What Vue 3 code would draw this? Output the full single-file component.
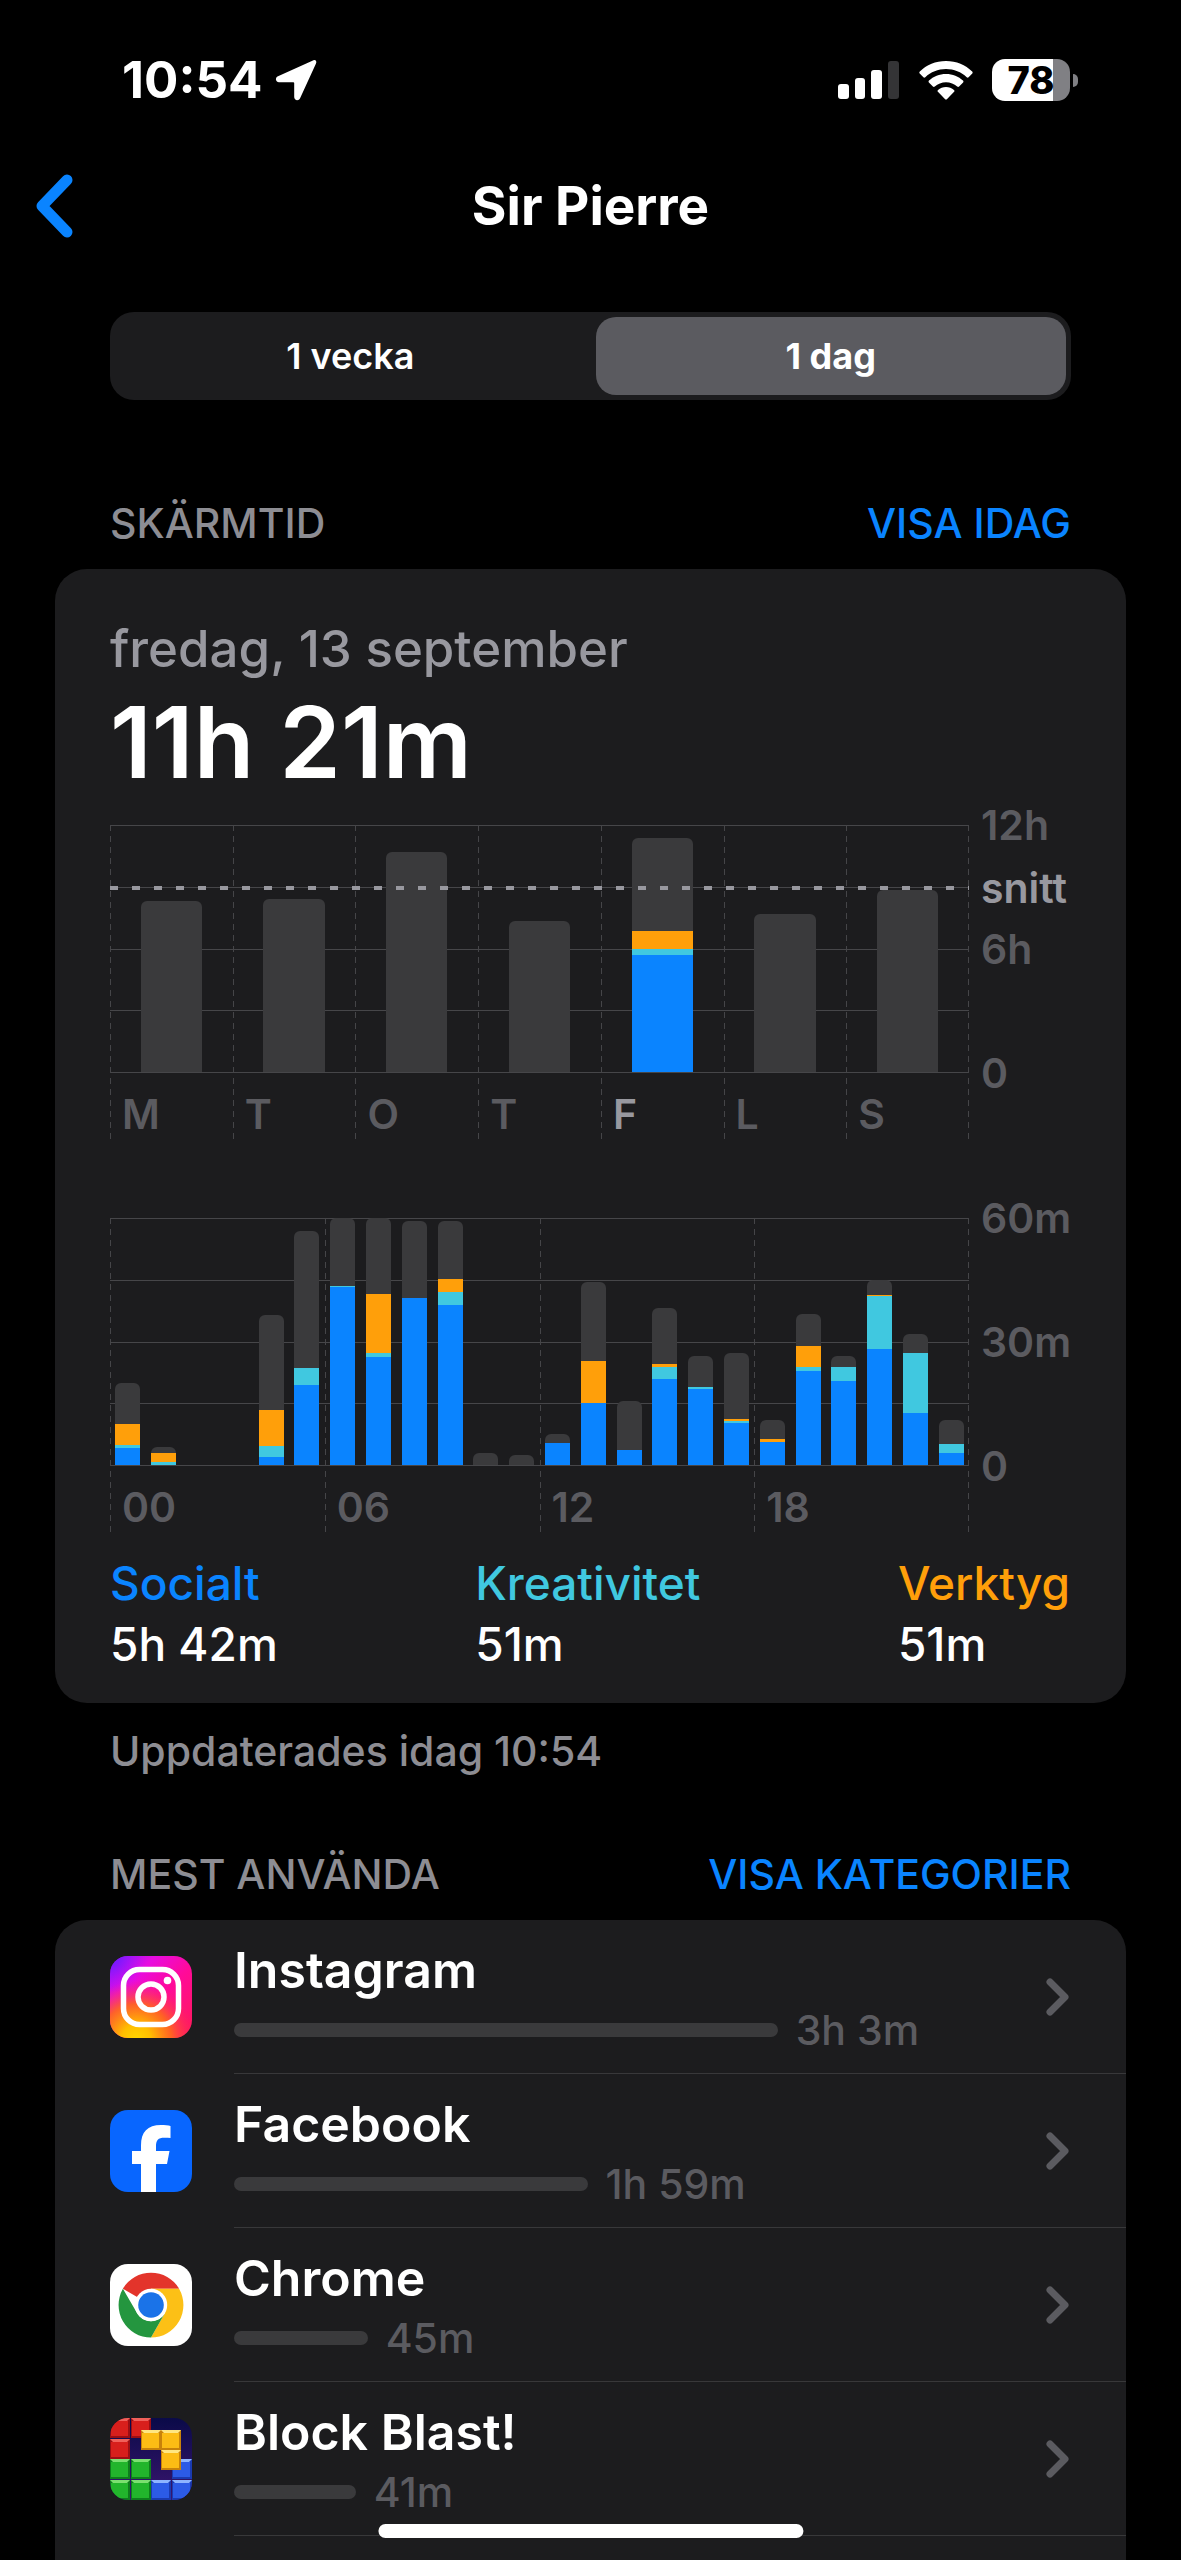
<template>
  <div class="screen">
    <header class="status-bar">
      <div class="status-left">
        <span class="clock">10:54</span>
        <svg class="location" viewBox="0 0 42 42" aria-hidden="true">
          <path d="M38.5 1.2 3 17.2c-3.4 1.6-2.4 6 1 6h14.300c.6 0 .9.3.9.9V38c0 3.600 4.500 4.400 6 1L41 4.500c1-2.300-.6-4.200-2.500-3.300z" />
        </svg>
      </div>
      <div class="status-right">
        <svg class="signal" viewBox="0 0 62 40" aria-hidden="true">
          <rect x="0" y="24" width="11" height="15" rx="3" />
          <rect x="17" y="18" width="10" height="21" rx="3" />
          <rect x="33" y="10" width="11" height="29" rx="3" />
          <rect class="dim" x="50" y="1" width="11" height="38" rx="3" />
        </svg>
        <svg class="wifi" viewBox="0 0 54 40" aria-hidden="true">
          <path d="M27 1C16.700 1 7.500 5 .8 11.500c-.6.6-.6 1.300-.1 1.900l3.700 3.800c.5.600 1.300.600 1.900 0C11.700 12 19 9 27 9s15.300 3 20.700 8.200c.6.600 1.400.600 1.900 0l3.700-3.800c.5-.6.5-1.300-.1-1.900C46.500 5 37.300 1 27 1z" />
          <path d="M27 14c-6.600 0-12.600 2.500-17 6.600-.6.600-.6 1.400-.1 1.900l4 4.100c.6.600 1.300.500 1.900 0 3-2.700 6.900-4.300 11.200-4.300s8.200 1.600 11.200 4.300c.6.500 1.300.6 1.900 0l4-4.100c.5-.5.5-1.300-.1-1.900C39.600 16.500 33.600 14 27 14z" />
          <path d="M27 27c-3 0-5.800 1.100-8 2.900-.6.600-.6 1.300-.1 1.900l7 7.100c.6.700 1.600.700 2.200 0l7-7.100c.5-.6.5-1.300-.1-1.900-2.200-1.800-5-2.900-8-2.900z" />
        </svg>
        <div class="battery">
          <div class="battery-body">78</div>
          <div class="battery-cap"></div>
        </div>
      </div>
    </header>

    <nav class="nav-bar">
      <button class="back" type="button" aria-label="Tillbaka">
        <svg viewBox="0 0 38 64" aria-hidden="true">
          <path d="M32 6 7 32l25 26" />
        </svg>
      </button>
      <h1>Sir Pierre</h1>
    </nav>

    <div class="segmented">
      <button
        v-for="option in periods"
        :key="option"
        type="button"
        :class="{ active: option === period }"
        :aria-pressed="option === period"
        @click="period = option"
      >
        {{ option }}
      </button>
    </div>

    <div class="section-header">
      <h2>SKÄRMTID</h2>
      <a href="#today">VISA IDAG</a>
    </div>

    <section class="card summary">
      <p class="date">fredag, 13 september</p>
      <p class="total">11h 21m</p>

      <div v-for="chart in charts" :key="chart.id" class="chart" :class="chart.id">
        <div class="plot">
          <div class="grid-lines">
            <i v-for="n in 5" :key="n"></i>
          </div>
          <div class="ticks">
            <div
              v-for="(tick, i) in chart.ticks"
              :key="i"
              class="tick"
              :class="{ current: i === chart.current }"
            >
              {{ tick }}
            </div>
          </div>
          <div class="bars">
            <div v-for="(bar, i) in chart.bars" :key="i" class="slot">
              <div class="bar">
                <div
                  v-for="(value, k) in bar"
                  :key="k"
                  :class="categories[k]"
                  :style="{ height: (value / chart.max) * 100 + '%' }"
                ></div>
              </div>
            </div>
          </div>
          <div v-if="chart.average" class="average">
            <i :style="{ bottom: averageOffset(chart) }"></i>
          </div>
        </div>
        <div class="axis">
          <span v-for="label in chart.axis" :key="label">{{ label }}</span>
          <span v-if="chart.average" class="snitt" :style="{ bottom: averageOffset(chart) }">snitt</span>
        </div>
      </div>

      <dl class="legend">
        <div v-for="item in legend" :key="item.name">
          <dt :class="item.kind">{{ item.name }}</dt>
          <dd>{{ item.time }}</dd>
        </div>
      </dl>
    </section>

    <p class="updated">Uppdaterades idag 10:54</p>

    <div class="section-header second">
      <h2>MEST ANVÄNDA</h2>
      <a href="#categories">VISA KATEGORIER</a>
    </div>

    <section class="card apps">
      <a v-for="app in apps" :key="app.id" class="app" :href="'#' + app.id">
        <!-- Instagram -->
        <svg v-if="app.id === 'instagram'" class="app-icon" viewBox="0 0 82 82" aria-hidden="true">
          <defs>
            <linearGradient id="ig-base" x1="0" y1="0" x2="1" y2="1">
              <stop offset="0" stop-color="#8a16ff" />
              <stop offset=".28" stop-color="#e80ce0" />
              <stop offset=".55" stop-color="#ff0a9a" />
              <stop offset="1" stop-color="#ff1a55" />
            </linearGradient>
            <radialGradient id="ig-warm" cx=".32" cy="1.02" r=".72">
              <stop offset="0" stop-color="#ffd600" />
              <stop offset=".25" stop-color="#ffbe00" />
              <stop offset=".6" stop-color="#ff6a1a" stop-opacity=".9" />
              <stop offset="1" stop-color="#ff2a5a" stop-opacity="0" />
            </radialGradient>
            <radialGradient id="ig-violet" cx="0" cy="0" r=".45">
              <stop offset="0" stop-color="#5b1cff" />
              <stop offset="1" stop-color="#b012ff" stop-opacity="0" />
            </radialGradient>
          </defs>
          <rect width="82" height="82" rx="18" fill="url(#ig-base)" />
          <rect width="82" height="82" rx="18" fill="url(#ig-warm)" />
          <rect width="82" height="82" rx="18" fill="url(#ig-violet)" />
          <rect x="13.500" y="13.500" width="55" height="55" rx="16" fill="none" stroke="#fff" stroke-width="5.500" />
          <circle cx="41" cy="41" r="13" fill="none" stroke="#fff" stroke-width="5.500" />
          <circle cx="57.500" cy="24.500" r="3.800" fill="#fff" />
        </svg>
        <!-- Facebook -->
        <svg v-else-if="app.id === 'facebook'" class="app-icon" viewBox="0 0 82 82" aria-hidden="true">
          <rect width="82" height="82" rx="18" fill="#0866ff" />
          <path fill="#fff" d="M31 82V54h-9V41h9v-5.500C31 22 37.500 15 51 15c3.500 0 7.500.4 9.500.9V28c-1.500-.2-3.500-.3-6-.3-6.500 0-8.500 2.500-8.500 8.800V41h13.500L57 54H46v28z" />
        </svg>
        <!-- Chrome -->
        <svg v-else-if="app.id === 'chrome'" class="app-icon" viewBox="0 0 82 82" aria-hidden="true">
          <rect width="82" height="82" rx="18" fill="#fff" />
          <path fill="#e3342b" d="M41 41 12.900 24.800A32.500 32.500 0 0 1 69.100 24.800H41z" />
          <path fill="#fcc016" d="M41 24.800H69.100A32.500 32.500 0 0 1 41 73.500L55 49.100z" />
          <path fill="#24963f" d="M12.900 24.800 27 49.100A16.200 16.200 0 0 0 55 49.100L41 73.500A32.500 32.500 0 0 1 12.900 24.800z" />
          <circle cx="41" cy="41" r="16.200" fill="#fff" />
          <circle cx="41" cy="41" r="12.800" fill="#1a73e8" />
        </svg>
        <!-- Block Blast -->
        <svg v-else class="app-icon" viewBox="0 0 82 82" aria-hidden="true">
          <defs>
            <clipPath id="bb-clip"><rect width="82" height="82" rx="18" /></clipPath>
            <linearGradient id="bb-bg" x1="0" y1="0" x2="0" y2="1">
              <stop offset="0" stop-color="#0a0a48" />
              <stop offset="1" stop-color="#3a1670" />
            </linearGradient>
          </defs>
          <g clip-path="url(#bb-clip)">
            <rect width="82" height="82" fill="url(#bb-bg)" />
            <g v-for="(block, i) in blocks" :key="i">
              <rect :x="block.x" :y="block.y" width="20" height="20" :fill="block.tone[2]" />
              <path :d="`M${block.x} ${block.y}h20l-3 3h-14z`" :fill="block.tone[0]" />
              <rect :x="block.x + 1" :y="block.y + 3" width="17" height="15" :fill="block.tone[1]" />
            </g>
          </g>
        </svg>

        <div class="app-content">
          <div class="app-body">
            <span class="app-name">{{ app.name }}</span>
            <div class="usage">
              <div class="usage-bar" :style="{ width: (app.minutes / longest) * 68.3 + '%' }"></div>
              <span class="usage-time">{{ app.time }}</span>
            </div>
          </div>
          <svg class="chevron" viewBox="0 0 25 40" aria-hidden="true">
            <path d="M5 5l15 15L5 35" />
          </svg>
        </div>
      </a>
    </section>

    <div class="home-indicator"></div>
  </div>
</template>

<script setup>
import { ref } from 'vue'

const periods = ['1 vecka', '1 dag']
const period = ref('1 dag')

// Order of the values in every bar, from the bottom up
const categories = ['social', 'creative', 'tools', 'other']

const charts = [
  {
    id: 'week',
    max: 12,
    average: 8.94,
    axis: ['12h', '6h', '0'],
    ticks: ['M', 'T', 'O', 'T', 'F', 'L', 'S'],
    current: 4,
    // hours
    bars: [
      [0, 0, 0, 8.3],
      [0, 0, 0, 8.4],
      [0, 0, 0, 10.7],
      [0, 0, 0, 7.35],
      [5.7, 0.3, 0.85, 4.5],
      [0, 0, 0, 7.7],
      [0, 0, 0, 8.85]
    ]
  },
  {
    id: 'day',
    max: 60,
    axis: ['60m', '30m', '0'],
    ticks: ['00', '06', '12', '18'],
    // minutes
    bars: [
      [4.2, 0.7, 5.1, 9.9],
      [0, 0.8, 2.2, 1.3],
      [],
      [],
      [1.9, 2.8, 8.7, 23.1],
      [19.4, 4.2, 0, 33.3],
      [43.2, 0.3, 0, 16.5],
      [26.2, 0.9, 14.4, 18.5],
      [40.6, 0, 0, 18.7],
      [38.9, 3.2, 3.1, 14.2],
      [0, 0, 0, 2.9],
      [0, 0, 0, 2.5],
      [5.4, 0, 0, 2.1],
      [15, 0, 10.2, 19.3],
      [3.7, 0, 0, 11.9],
      [20.8, 2.9, 0.9, 13.5],
      [18.5, 0.5, 0, 7.5],
      [10.3, 0.4, 0.6, 15.8],
      [5.7, 0, 0.7, 4.6],
      [22.8, 0.9, 5.1, 8],
      [20.4, 3.3, 0, 2.9],
      [28.1, 12.9, 0.3, 3.6],
      [12.6, 14.5, 0, 4.8],
      [2.8, 2.4, 0, 5.8]
    ]
  }
]

const averageOffset = (chart) => (chart.average / chart.max) * 100 + '%'

const legend = [
  { name: 'Socialt', time: '5h 42m', kind: 'social-text' },
  { name: 'Kreativitet', time: '51m', kind: 'creative-text' },
  { name: 'Verktyg', time: '51m', kind: 'tools-text' }
]

const apps = [
  { id: 'instagram', name: 'Instagram', time: '3h 3m', minutes: 183 },
  { id: 'facebook', name: 'Facebook', time: '1h 59m', minutes: 119 },
  { id: 'chrome', name: 'Chrome', time: '45m', minutes: 45 },
  { id: 'blockblast', name: 'Block Blast!', time: '41m', minutes: 41 }
]
const longest = Math.max(...apps.map((app) => app.minutes))

// Block tones: highlight, face, shade
const red = ['#f0605a', '#d81f1c', '#9c0f14']
const green = ['#7be070', '#22b52c', '#0e7d1c']
const blue = ['#8db4ff', '#2c5be6', '#1a3ab0']
const yellow = ['#ffe680', '#fcbc14', '#c8820a']

const blocks = [
  { x: 0, y: 0, tone: red },
  { x: 21, y: 0, tone: red },
  { x: 0, y: 21, tone: red },
  { x: 0, y: 41, tone: green },
  { x: 21, y: 41, tone: green },
  { x: 0, y: 62, tone: green },
  { x: 21, y: 62, tone: green },
  { x: 62, y: 41, tone: blue },
  { x: 41, y: 62, tone: blue },
  { x: 62, y: 62, tone: blue },
  { x: 31, y: 12, tone: yellow },
  { x: 51, y: 12, tone: yellow },
  { x: 51, y: 32, tone: yellow }
]
</script>

<style>
body {
  margin: 0;
  background: #000;
}
</style>

<style scoped>
.screen {
  position: relative;
  display: flex;
  flex-direction: column;
  box-sizing: border-box;
  min-height: 100vh;
  background: #000;
  color: #fff;
  font-family: Inter, "Liberation Sans", sans-serif;
}

h1,
h2,
p,
dl,
dd {
  margin: 0;
}

a {
  text-decoration: none;
}

button {
  border: 0;
  padding: 0;
  background: none;
  color: inherit;
  font: inherit;
  cursor: pointer;
}

/* Status bar */
.status-bar {
  display: flex;
  justify-content: space-between;
  align-items: center;
  height: 48px;
  padding: 56px 103px 0 122px;
}

.status-left,
.status-right,
.battery {
  display: flex;
  align-items: center;
}

.status-left {
  gap: 12px;
}

.status-right {
  gap: 19px;
}

.clock {
  font-size: 51px;
  font-weight: 700;
  line-height: 48px;
}

.location {
  width: 42px;
  height: 42px;
  fill: #fff;
}

.signal {
  width: 62px;
  height: 40px;
  fill: #fff;
}

.signal .dim {
  fill: #343436;
}

.wifi {
  width: 54px;
  height: 40px;
  fill: #fff;
}

.battery {
  gap: 3px;
}

.battery-body {
  width: 78px;
  height: 42px;
  border-radius: 13px;
  background: linear-gradient(to right, #fff 78%, #808084 78%);
  color: #000;
  font-size: 38px;
  font-weight: 800;
  line-height: 42px;
  text-align: center;
}

.battery-cap {
  width: 5px;
  height: 13px;
  border-radius: 0 5px 5px 0;
  background: #808084;
}

/* Navigation */
.nav-bar {
  display: grid;
  grid-template-columns: 1fr auto 1fr;
  align-items: center;
  height: 88px;
  margin-top: 58px;
  padding: 0 35px;
}

.nav-bar h1 {
  font-size: 53px;
  font-weight: 700;
  line-height: 60px;
}

.back {
  justify-self: start;
  display: flex;
}

.back svg {
  width: 38px;
  height: 64px;
}

.back path,
.chevron path {
  fill: none;
  stroke: #0a84ff;
  stroke-width: 11;
  stroke-linecap: round;
  stroke-linejoin: round;
}

.segmented {
  display: grid;
  grid-template-columns: 1fr 1fr;
  gap: 10px;
  box-sizing: border-box;
  height: 88px;
  margin: 62px 110px 0;
  padding: 5px;
  border-radius: 24px;
  background: #1c1c1e;
}

.segmented button {
  border-radius: 20px;
  font-size: 36px;
  font-weight: 600;
}

.segmented .active {
  background: #5b5b60;
  font-weight: 700;
}

/* Section headers */
.section-header {
  display: flex;
  justify-content: space-between;
  margin: 99px 110px 22px;
  font-size: 41px;
  font-weight: 500;
  line-height: 48px;
}

.section-header.second {
  margin-top: 75px;
}

.section-header h2 {
  color: #8d8d93;
  font-size: inherit;
  font-weight: inherit;
}

.section-header a {
  color: #0a84ff;
}

.card {
  margin: 0 55px;
  border-radius: 32px;
  background: #1c1c1e;
}

/* Summary */
.summary {
  padding: 50px 56px 28px 55px;
}

.date {
  color: #98989f;
  font-size: 51px;
  font-weight: 500;
  line-height: 60px;
}

.total {
  margin-top: 13px;
  font-size: 99px;
  font-weight: 600;
  line-height: 100px;
}

.chart {
  display: flex;
}

.chart.week {
  margin-top: 33px;
}

.chart.day {
  margin-top: 79px;
}

.plot {
  flex: 1;
  display: grid;
  grid-template-rows: 248px 66px;
}

.grid-lines {
  grid-area: 1 / 1;
  display: flex;
  flex-direction: column;
  justify-content: space-between;
}

.grid-lines i {
  height: 1px;
  background: #464649;
}

.ticks {
  grid-area: 1 / 1 / 3 / 2;
  display: flex;
  background: repeating-linear-gradient(to bottom, #454548 0 6px, transparent 6px 11px) right / 1px 100% no-repeat;
}

.tick {
  flex: 1 1 0;
  display: flex;
  align-items: flex-end;
  padding-left: 12px;
  background: repeating-linear-gradient(to bottom, #454548 0 6px, transparent 6px 11px) left / 1px 100% no-repeat;
  color: #5b5b60;
  font-size: 41px;
  font-weight: 600;
  line-height: 50px;
}

.tick.current {
  color: #98989f;
}

.bars {
  grid-area: 1 / 1;
  display: flex;
  padding-bottom: 1px;
}

.slot {
  flex: 1 1 0;
  display: flex;
  justify-content: center;
}

.bar {
  display: flex;
  flex-direction: column-reverse;
  width: 50%;
}

.day .bar {
  width: 70%;
}

.social {
  background: #0a84ff;
}

.creative {
  background: #40c8e0;
}

.tools {
  background: #ff9f0a;
}

.other {
  border-radius: 6px 6px 0 0;
  background: #3a3a3c;
}

.average {
  grid-area: 1 / 1;
  position: relative;
}

.average i {
  position: absolute;
  left: 0;
  right: 0;
  height: 4px;
  margin-bottom: -2px;
  background: repeating-linear-gradient(to right, #98989f 0 8px, transparent 8px 22px);
}

.axis {
  position: relative;
  display: flex;
  flex-direction: column;
  justify-content: space-between;
  box-sizing: border-box;
  width: 101px;
  height: 248px;
  padding-left: 12px;
  color: #5b5b60;
  font-size: 41px;
  font-weight: 600;
  line-height: 48px;
}

.axis span {
  margin: -24px 0;
}

.axis .snitt {
  position: absolute;
  color: #98989f;
}

.legend {
  display: flex;
  justify-content: space-between;
  margin-top: 21px;
  font-size: 46px;
  font-weight: 500;
  line-height: 61px;
}

.social-text {
  color: #0a84ff;
}

.creative-text {
  color: #40c8e0;
}

.tools-text {
  color: #ff9f0a;
}

.updated {
  margin: 24px 110px 0;
  color: #8d8d93;
  font-size: 41px;
  font-weight: 500;
  line-height: 48px;
}

/* App list */
.apps {
  flex: 1;
  border-radius: 32px 32px 0 0;
}

.app {
  display: flex;
  align-items: center;
  gap: 42px;
  padding-left: 55px;
  color: inherit;
}

.app-icon {
  flex: none;
  width: 82px;
  height: 82px;
}

.app-content {
  flex: 1;
  display: flex;
  align-items: center;
  gap: 15px;
  box-sizing: border-box;
  height: 154px;
  padding-right: 56px;
  border-bottom: 1px solid #38383a;
}

.app-body {
  flex: 1;
  display: flex;
  flex-direction: column;
  gap: 6px;
}

.app-name {
  font-size: 50px;
  font-weight: 600;
  line-height: 60px;
}

.usage {
  display: flex;
  align-items: center;
  gap: 18px;
}

.usage-bar {
  height: 14px;
  border-radius: 7px;
  background: #3a3a3c;
}

.usage-time {
  color: #5b5b60;
  font-size: 41px;
  font-weight: 500;
  line-height: 48px;
}

.chevron {
  width: 25px;
  height: 40px;
}

.chevron path {
  stroke: #5b5b60;
  stroke-width: 7;
}

.home-indicator {
  position: absolute;
  bottom: 22px;
  left: 50%;
  width: 36%;
  height: 14px;
  border-radius: 7px;
  background: #fff;
  transform: translateX(-50%);
}
</style>
